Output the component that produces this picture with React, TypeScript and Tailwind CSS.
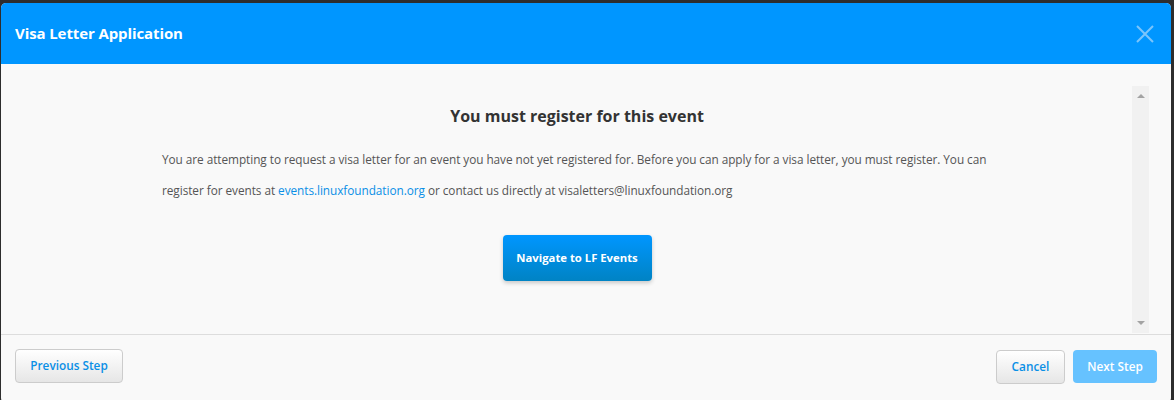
import React from "react";

export default function App() {
  const font = { fontFamily: '"Open Sans", "Noto Sans", sans-serif' };
  return (
    <div className="w-[1174px] h-[400px] bg-[#2d2d2d] pt-[3px] pl-[1px] pr-[3px] overflow-hidden" style={font}>
      <div className="w-[1170px] h-[400px] rounded-[5px] overflow-hidden bg-[#f9f9f9] flex flex-col">
        {/* header */}
        <div className="h-[61px] bg-[#0096ff] flex items-center justify-between pl-[14px] pr-[16px] shrink-0">
          <h1 className="text-white font-bold text-[15px] tracking-[-0.1px]">Visa Letter Application</h1>
          <svg width="18" height="18" viewBox="0 0 18 18" className="mr-[1px]">
            <path d="M1 1 L17 17 M17 1 L1 17" stroke="#7cc5fb" strokeWidth="2" />
          </svg>
        </div>
        {/* body */}
        <div className="h-[271px] flex shrink-0 border-b border-[#dddddd]">
          <div className="flex-1 flex flex-col items-center">
            <div className="w-[830px] ml-[21px] pt-[40px]">
              <h2 className="text-center text-[#333333] font-bold text-[16px] leading-[24px]">You must register for this event</h2>
              <p className="mt-[16px] text-[#555555] text-[11.8px] tracking-[-0.05px] leading-[31px]">
                You are attempting to request a visa letter for an event you have not yet registered for. Before you can apply for a visa letter, you must register. You can register for events at{" "}
                <a className="text-[#0a8fe6]">events.linuxfoundation.org</a> or contact us directly at visaletters@linuxfoundation.org
              </p>
              <div className="flex justify-center mt-[29px]">
                <button className="w-[149px] h-[46px] rounded-[4px] bg-gradient-to-b from-[#0096ff] to-[#0083c4] text-white font-bold text-[11.3px] shadow-[0_2px_4px_rgba(0,0,0,0.2)]">
                  Navigate to LF Events
                </button>
              </div>
            </div>
          </div>
          <div className="w-[17px] mt-[22px] mb-[1px] bg-[#f1f1f1] flex flex-col justify-between items-center py-[8px] mr-[22px]">
            <div className="w-0 h-0 border-l-[4px] border-r-[4px] border-b-[4px] border-l-transparent border-r-transparent border-b-[#a3a3a3]" />
            <div className="w-0 h-0 border-l-[4px] border-r-[4px] border-t-[4px] border-l-transparent border-r-transparent border-t-[#a3a3a3]" />
          </div>
        </div>
        {/* footer */}
        <div className="flex items-start justify-between pt-[14px] px-[14px]">
          <button className="w-[108px] h-[34px] rounded-[4px] border border-[#cccccc] bg-gradient-to-b from-[#ffffff] to-[#e6e6e6] text-[#0a8fe6] font-semibold text-[11.8px]">
            Previous Step
          </button>
          <div className="flex gap-[8px] pt-[1px]">
            <button className="w-[69px] h-[34px] rounded-[4px] border border-[#cccccc] bg-gradient-to-b from-[#ffffff] to-[#e6e6e6] text-[#0a8fe6] font-semibold text-[11.8px]">
              Cancel
            </button>
            <button className="w-[84px] h-[33px] rounded-[4px] bg-[#66c2ff] text-white font-semibold text-[11.8px]">
              Next Step
            </button>
          </div>
        </div>
      </div>
    </div>
  );
}
